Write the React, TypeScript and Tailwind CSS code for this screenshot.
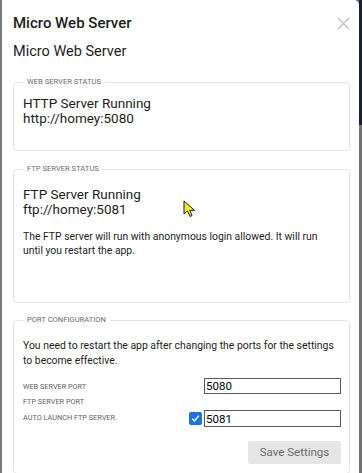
import React from "react";

function Fieldset({ legend, className, children }: { legend: string; className: string; children: React.ReactNode }) {
  return (
    <fieldset className={`border border-[#e4e4e4] rounded-[4px] ${className}`}>
      <legend className="px-[4px] text-[7.6px] leading-[10px] uppercase text-[#6b6b6b]">{legend}</legend>
      {children}
    </fieldset>
  );
}

export default function App() {
  return (
    <div className="w-[362px] h-[473px] flex bg-[#6f6f6f] overflow-hidden" style={{ fontFamily: "Roboto, 'Liberation Sans', sans-serif" }}>
      <div className="relative flex-1 bg-white border-l-2 border-[#7b7b7b] rounded-tr-[5px] pl-[11px] pr-[9px] text-[#1d1d1d]">
        {/* header */}
        <div className="flex items-center justify-between pt-[13px]">
          <div className="text-[15px] leading-[20px] font-medium">Micro Web Server</div>
          <svg width="13" height="13" viewBox="0 0 13 13" className="mt-[1px]">
            <path d="M1 1 L12 12 M12 1 L1 12" stroke="#c2c2c2" strokeWidth="1.4" fill="none" />
          </svg>
        </div>
        <div className="mt-[9px] text-[14.5px] leading-[20px]">Micro Web Server</div>

        {/* web server status */}
        <Fieldset legend="Web Server Status" className="mt-[15px] h-[74px] px-[9px]">
          <div className="pt-[9px] text-[13.5px] leading-[15px]">
            <div>HTTP Server Running</div>
            <div>http://homey:5080</div>
          </div>
        </Fieldset>

        {/* ftp server status */}
        <Fieldset legend="FTP Server Status" className="mt-[13px] h-[139px] px-[9px]">
          <div className="pt-[13px] text-[13.5px] leading-[15px]">
            <div>FTP Server Running</div>
            <div>ftp://homey:5081</div>
          </div>
          <p className="mt-[13px] pr-[6px] text-[10.4px] leading-[14px]">
            The FTP server will run with anonymous login allowed. It will run until you restart the app.
          </p>
        </Fieldset>

        {/* port configuration */}
        <Fieldset legend="Port Configuration" className="mt-[12px] h-[159px] pl-[9px] pr-[6px]">
          <p className="pt-[13px] text-[10.4px] leading-[15px]">
            You need to restart the app after changing the ports for the settings to become effective.
          </p>
          <div className="mt-[10px] mr-[2px] text-[7.3px] uppercase text-[#5e5e5e]">
            <div className="flex items-center justify-between h-[16px]">
              <span className="pt-[2px]">Web Server Port</span>
              <input
                defaultValue="5080"
                className="w-[137px] h-[16px] border border-[#5a5a5a] px-[1px] text-[11.5px] leading-[14px] text-black outline-none"
              />
            </div>
            <div className="flex items-center h-[16px]">
              <span>FTP Server Port</span>
            </div>
            <div className="flex items-center justify-between h-[17px]">
              <span>Auto launch FTP server.</span>
              <div className="flex items-center gap-[2px]">
                <span className="w-[13px] h-[13px] rounded-[2px] bg-[#1a73e8] flex items-center justify-center">
                  <svg width="9" height="9" viewBox="0 0 9 9">
                    <path d="M1.3 4.8 L3.5 7 L7.8 1.8" stroke="white" strokeWidth="1.5" fill="none" />
                  </svg>
                </span>
                <input
                  defaultValue="5081"
                  className="w-[137px] h-[17px] border border-[#5a5a5a] px-[1px] text-[11.5px] leading-[14px] text-black outline-none"
                />
              </div>
            </div>
          </div>
          <div className="flex justify-end mt-[14px] mr-[2px]">
            <button className="w-[93px] h-[23px] rounded-[2px] bg-[#e6e6e6] text-[11.5px] text-[#6a6a6a]">Save Settings</button>
          </div>
        </Fieldset>

        {/* mouse pointer */}
        <svg width="14" height="20" viewBox="0 0 14 20" className="absolute left-[181px] top-[200px]">
          <path d="M1 1 L1 14 L4.5 11 L7 16.5 L9 15.5 L6.8 10.3 L11.5 10.3 Z" fill="#f4ef1d" stroke="#1a1a1a" strokeWidth="1" strokeLinejoin="round" />
        </svg>
      </div>
      <div className="w-[3px] flex flex-col">
        <div className="h-[125px] bg-[#13213f]" />
        <div className="flex-1 bg-[#727272]" />
      </div>
    </div>
  );
}
